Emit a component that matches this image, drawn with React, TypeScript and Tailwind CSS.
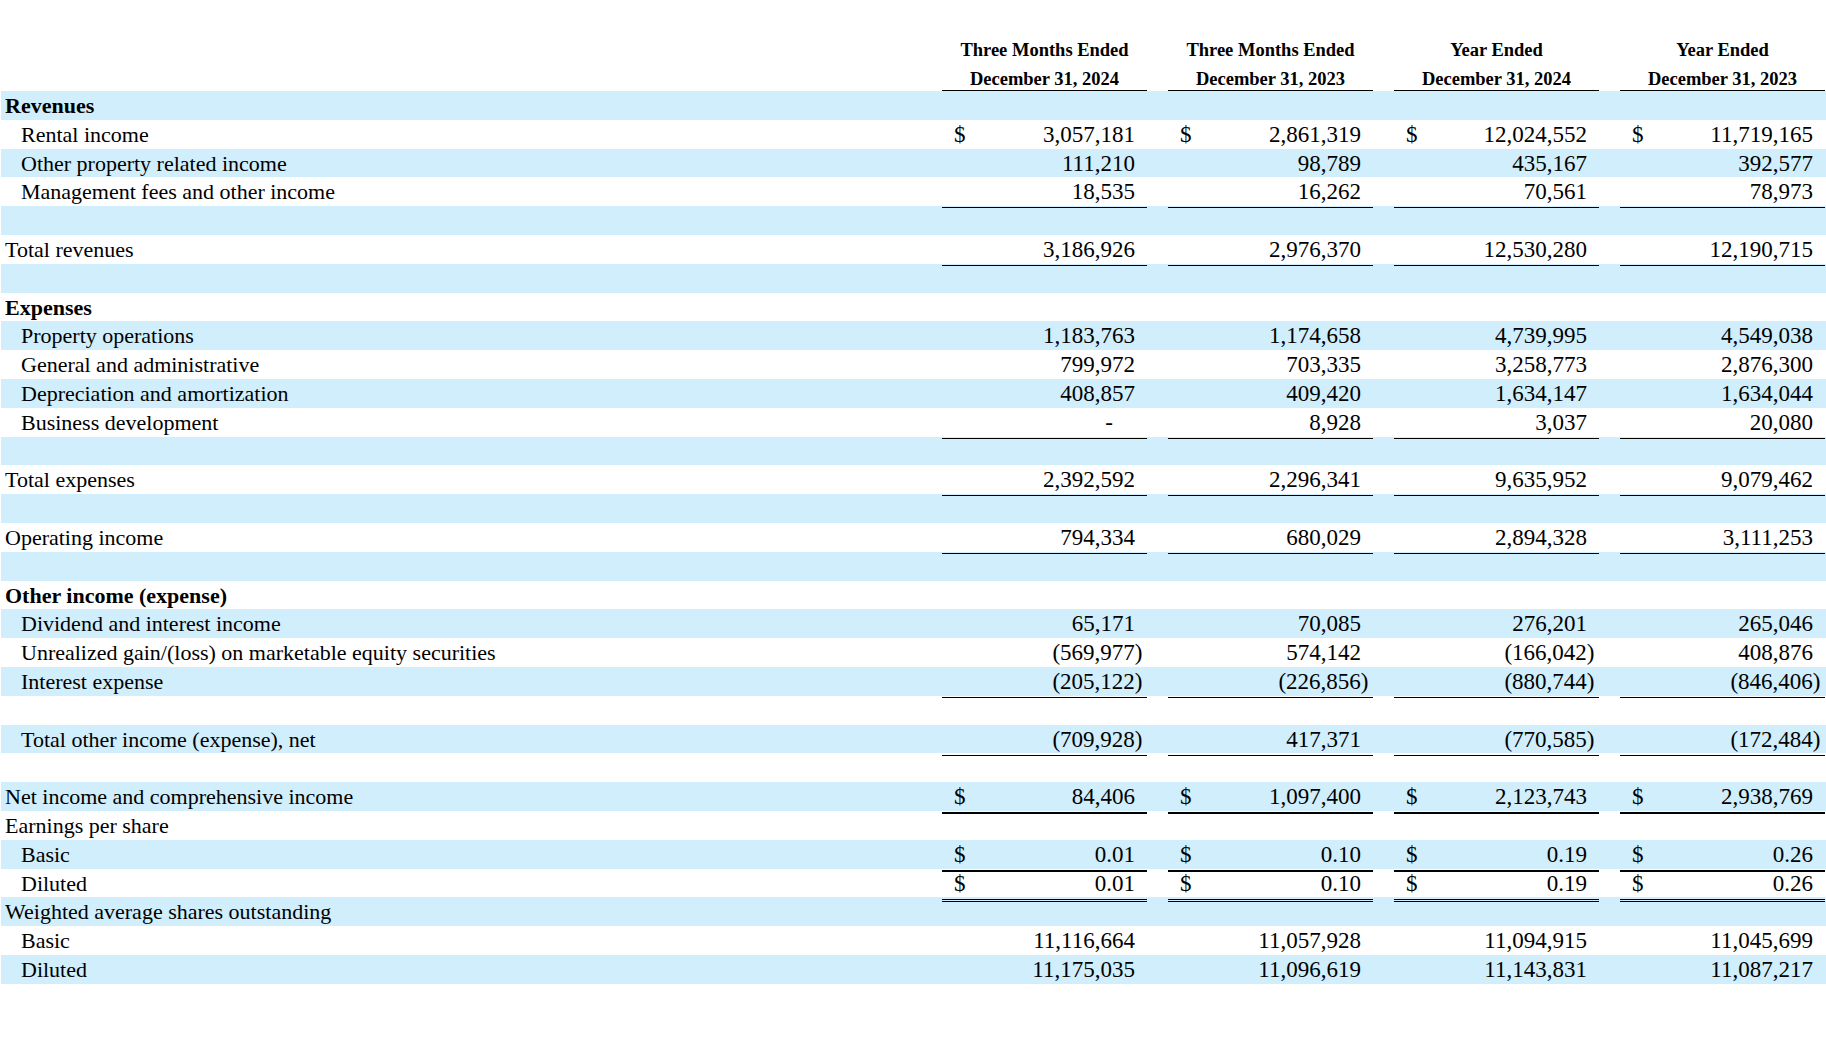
import React from "react";

type Line = "single" | "thick" | "double" | null;
type Row = {
  label: string;
  indent?: boolean;
  bold?: boolean;
  values?: string[];
  dollar?: boolean;
  line?: Line;
};

const rows: Row[] = [
  { label: "Revenues", bold: true },
  { label: "Rental income", indent: true, dollar: true, values: ["3,057,181", "2,861,319", "12,024,552", "11,719,165"] },
  { label: "Other property related income", indent: true, values: ["111,210", "98,789", "435,167", "392,577"] },
  { label: "Management fees and other income", indent: true, values: ["18,535", "16,262", "70,561", "78,973"], line: "single" },
  { label: "" },
  { label: "Total revenues", values: ["3,186,926", "2,976,370", "12,530,280", "12,190,715"], line: "single" },
  { label: "" },
  { label: "Expenses", bold: true },
  { label: "Property operations", indent: true, values: ["1,183,763", "1,174,658", "4,739,995", "4,549,038"] },
  { label: "General and administrative", indent: true, values: ["799,972", "703,335", "3,258,773", "2,876,300"] },
  { label: "Depreciation and amortization", indent: true, values: ["408,857", "409,420", "1,634,147", "1,634,044"] },
  { label: "Business development", indent: true, values: ["-", "8,928", "3,037", "20,080"], line: "single" },
  { label: "" },
  { label: "Total expenses", values: ["2,392,592", "2,296,341", "9,635,952", "9,079,462"], line: "single" },
  { label: "" },
  { label: "Operating income", values: ["794,334", "680,029", "2,894,328", "3,111,253"], line: "single" },
  { label: "" },
  { label: "Other income (expense)", bold: true },
  { label: "Dividend and interest income", indent: true, values: ["65,171", "70,085", "276,201", "265,046"] },
  { label: "Unrealized gain/(loss) on marketable equity securities", indent: true, values: ["(569,977)", "574,142", "(166,042)", "408,876"] },
  { label: "Interest expense", indent: true, values: ["(205,122)", "(226,856)", "(880,744)", "(846,406)"], line: "single" },
  { label: "" },
  { label: "Total other income (expense), net", indent: true, values: ["(709,928)", "417,371", "(770,585)", "(172,484)"], line: "single" },
  { label: "" },
  { label: "Net income and comprehensive income", dollar: true, values: ["84,406", "1,097,400", "2,123,743", "2,938,769"], line: "thick" },
  { label: "Earnings per share" },
  { label: "Basic", indent: true, dollar: true, values: ["0.01", "0.10", "0.19", "0.26"], line: "thick" },
  { label: "Diluted", indent: true, dollar: true, values: ["0.01", "0.10", "0.19", "0.26"], line: "double" },
  { label: "Weighted average shares outstanding" },
  { label: "Basic", indent: true, values: ["11,116,664", "11,057,928", "11,094,915", "11,045,699"] },
  { label: "Diluted", indent: true, values: ["11,175,035", "11,096,619", "11,143,831", "11,087,217"] },
];

const headers = [
  ["Three Months Ended", "December 31, 2024"],
  ["Three Months Ended", "December 31, 2023"],
  ["Year Ended", "December 31, 2024"],
  ["Year Ended", "December 31, 2023"],
];

function lineClass(line: Line | undefined) {
  if (line === "single") return "border-b border-black";
  if (line === "thick") return "border-b-2 border-black";
  if (line === "double") return "border-b-[3px] border-double border-black";
  return "";
}

function ValueCell({ v, dollar, line }: { v: string; dollar?: boolean; line?: Line }) {
  const neg = v.startsWith("(");
  const dash = v === "-";
  return (
    <div className={`flex h-full items-center justify-between text-[23px] ${lineClass(line)}`}>
      <span className="pl-[12px]">{dollar ? "$" : ""}</span>
      <span className={dash ? "pr-[34px]" : neg ? "pr-[4.5px]" : "pr-[12px]"}>{v}</span>
    </div>
  );
}

export default function App() {
  return (
    <div
      className="h-[1045px] w-[1826px] overflow-hidden bg-white text-black"
      style={{ fontFamily: '"Liberation Serif", "Times New Roman", serif' }}
    >
      <div className="grid grid-cols-[920px_205px_205px_205px_205px] gap-x-[21px] pl-[1px]">
        <div />
        {headers.map((h, i) => (
          <div key={i} className="border-b border-black pt-[36px] text-center text-[18.5px] font-bold">
            <div className="h-[28px] leading-[28px]">{h[0]}</div>
            <div className="h-[26px] leading-[30px]">{h[1]}</div>
          </div>
        ))}
      </div>
      <div className="pl-[1px]">
        {rows.map((r, i) => (
          <div
            key={i}
            className={`grid h-[28.8px] grid-cols-[920px_205px_205px_205px_205px] gap-x-[21px] text-[22px] leading-[30px] ${
              i % 2 === 0 ? "bg-[#d0eefb]" : "bg-white"
            }`}
          >
            <div
              className={`whitespace-nowrap ${r.indent ? "pl-[20px]" : "pl-[4px]"} ${r.bold ? "font-bold" : ""}`}
            >
              {r.label}
            </div>
            {r.values
              ? r.values.map((v, j) => <ValueCell key={j} v={v} dollar={r.dollar} line={r.line} />)
              : [0, 1, 2, 3].map((j) => <div key={j} />)}
          </div>
        ))}
      </div>
    </div>
  );
}
